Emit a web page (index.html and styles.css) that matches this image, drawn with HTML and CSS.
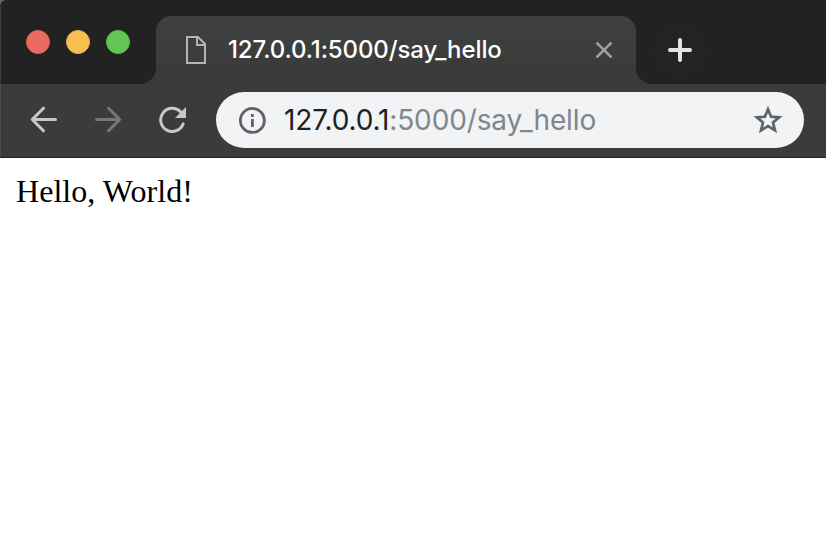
FILE: index.html
```html
<!DOCTYPE html>
<html lang="en">
<head>
<meta charset="utf-8">
<title>127.0.0.1:5000/say_hello</title>
<link rel="stylesheet" href="styles.css">
</head>
<body>
<div class="browser">
  <header class="tabstrip">
    <div class="controls"><i class="dot close"></i><i class="dot minimize"></i><i class="dot maximize"></i></div>
    <div class="tab">
      <svg class="page-icon" width="20" height="28" viewBox="0 0 20 28"><path d="M1 1H12L19 8V27H1ZM11 1V9H19" /></svg>
      <span class="tab-title">127.0.0.1:5000/say_hello</span>
      <svg class="tab-close" width="16" height="16" viewBox="0 0 16 16"><path d="M1.3 1.3 14.7 14.7M14.7 1.3 1.3 14.7"/></svg>
    </div>
    <div class="strip-rest">
      <div class="new-tab"><svg width="24" height="24" viewBox="0 0 24 24"><path d="M12 2V22M2 12H22"/></svg></div>
    </div>
  </header>
  <nav class="toolbar">
    <svg class="nav-icon" width="28" height="28" viewBox="0 0 28 28"><path d="M26.5 13.5H3.5M14.5 2.2 3.2 13.5 14.5 24.8"/></svg>
    <svg class="nav-icon disabled" width="28" height="28" viewBox="0 0 28 28"><path d="M2.5 13.5H25.5M14.5 2.2 25.8 13.5 14.5 24.8"/></svg>
    <svg class="nav-icon reload" width="28" height="28" viewBox="0 0 28 28"><path d="M24.2 17.8A11.6 11.6 0 1 1 21.4 5.6"/><path class="solid" d="M27 1V12H16Z"/></svg>
    <div class="address">
      <svg class="info" width="28" height="28" viewBox="0 0 28 28"><circle cx="14.4" cy="14.4" r="12"/><path d="M14.4 8V11M14.4 13V21"/></svg>
      <div class="url"><span class="host">127.0.0.1</span>:5000/say_hello</div>
      <svg class="star" width="30" height="30" viewBox="0 0 30 30"><path d="M15 4.2 18.1 11.7 26.2 12.3 20 17.5 22 25.4 15 21.1 8 25.4 10 17.5 3.8 12.3 11.9 11.7Z"/></svg>
    </div>
  </nav>
  <main class="page">Hello, World!</main>
</div>
</body>
</html>
```
FILE: styles.css
```css
* { box-sizing: border-box; }
body { margin: 0; background: #fff; }
svg { display: block; flex: none; fill: none; }
.browser { width: 826px; height: 544px; overflow: hidden; display: flex; flex-direction: column; }
.tabstrip { height: 84px; display: flex; background: linear-gradient(#666 0 50%, #3b3b3b 50%); }
.controls {
  width: 156px; height: 84px; padding: 30px 0 0 25px; display: flex; gap: 16px;
  background: #222; border-radius: 6px 0 16px 0; border-left: 1px solid #3c3c3c;
}
.dot { width: 24px; height: 24px; border-radius: 50%; }
.close { background: #ec6b60; border: 1px solid #df6158; }
.minimize { background: #f6bf50; border: 1px solid #e3b04b; }
.maximize { background: #62c656; border: 1px solid #57b84c; }
.tab {
  width: 480px; height: 84px; padding: 16px 24px 0 30px;
  display: flex; align-items: center;
  background: radial-gradient(circle at 16px 32px, transparent 16px, #222 16.5px) 0 0 / 16px 32px no-repeat,
    radial-gradient(circle at 0 32px, transparent 16px, #222 16.5px) 100% 0 / 16px 32px no-repeat,
    linear-gradient(#222 16px, #3e4140 16px, #3b3b3b 67px);
}
.page-icon { stroke: #b5b5b5; stroke-width: 2; }
.tab-title {
  flex: 1; margin-left: 22px; white-space: nowrap; color: #fff;
  font: 500 24px/36px Inter, sans-serif; letter-spacing: -0.1px;
}
.tab-close { stroke: #a0a0a0; stroke-width: 2.6; stroke-linecap: round; }
.strip-rest { flex: 1; padding: 22px 0 0 16px; background: #222; border-radius: 0 0 0 16px; }
.new-tab { width: 56px; height: 56px; display: grid; place-items: center; border-radius: 50%; background: #232323; }
.new-tab svg { stroke: #e4e2e2; stroke-width: 4; stroke-linecap: round; }
.toolbar {
  height: 74px; padding: 8px 22px 10px 29px; display: flex; align-items: center;
  background: #3b3b3b; border-bottom: 1px solid #252525; box-shadow: inset 1px 0 #4a4a4a;
}
.nav-icon { margin-right: 37px; stroke: #c8c8c8; stroke-width: 3; stroke-linecap: round; stroke-linejoin: round; }
.disabled { stroke: #777; }
.reload { margin-right: 29px; }
.solid { fill: #c8c8c8; stroke: none; }
.address { flex: 1; height: 56px; padding: 0 21px 0 22px; display: flex; align-items: center; background: #f1f3f4; border-radius: 28px; }
.info { stroke: #5f6368; stroke-width: 2.8; }
.url { flex: 1; margin-left: 18px; padding-top: 1px; white-space: nowrap; color: #80868b; font: 400 28px/40px Inter, sans-serif; letter-spacing: -0.13px; }
.host { color: #202124; }
.star { stroke: #5f6368; stroke-width: 2.7; }
.page { flex: 1; padding: 15px 16px; background: #fff; color: #000; font: 32px/36px "Liberation Serif", serif; letter-spacing: 0.05px; }
```
